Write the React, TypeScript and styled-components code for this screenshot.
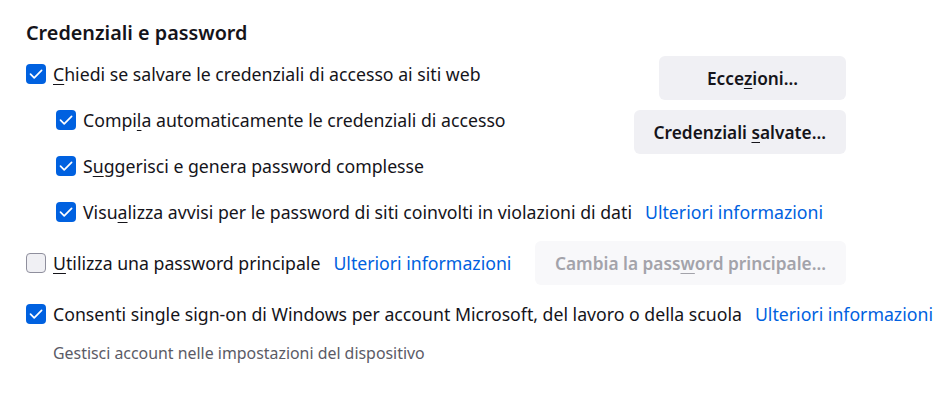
import { FC, ReactNode } from 'react'
import styled, { createGlobalStyle } from 'styled-components'

const COLORS = {
    text: '#15141a',
    muted: '#5b5b66',
    accent: '#0061e0',
    link: '#0061e0',
    buttonBg: '#f0f0f4',
    disabledBg: '#f8f8fa',
    disabledText: '#a3a3aa',
    border: '#8f8f9d',
}

const GlobalStyle = createGlobalStyle`
  body {
    margin: 0;
    background: #ffffff;
    font-family: "Noto Sans", "Open Sans", sans-serif;
    color: ${COLORS.text};
  }
`

const Key: FC<{ children: ReactNode }> = ({ children }) => <U>{children}</U>

const CheckBox: FC<{ checked?: boolean }> = ({ checked }) => (
    <Box $checked={checked}>
        {checked && (
            <svg width="20" height="20" viewBox="0 0 20 20">
                <path d="M4.5 10.2 L8.2 13.8 L15.6 6.4" fill="none" stroke="#fff" strokeWidth="1.7"
                      strokeLinecap="round" strokeLinejoin="round"/>
            </svg>
        )}
    </Box>
)

const App: FC = () => {
    return (
        <>
            <GlobalStyle/>
            <Page>
                <Title>Credenziali e password</Title>
                <TopArea>
                    <Checks>
                        <Row>
                            <CheckBox checked/>
                            <Label><Key>C</Key>hiedi se salvare le credenziali di accesso ai siti web</Label>
                        </Row>
                        <Row $indent>
                            <CheckBox checked/>
                            <Label>Compi<Key>l</Key>a automaticamente le credenziali di accesso</Label>
                        </Row>
                        <Row $indent>
                            <CheckBox checked/>
                            <Label>S<Key>u</Key>ggerisci e genera password complesse</Label>
                        </Row>
                        <Row $indent>
                            <CheckBox checked/>
                            <Label>Visu<Key>a</Key>lizza avvisi per le password di siti coinvolti in violazioni di dati</Label>
                            <Link>Ulteriori informazioni</Link>
                        </Row>
                    </Checks>
                    <Buttons>
                        <Button $minWidth={187}>Ecce<Key>z</Key>ioni...</Button>
                        <Button>Credenziali <Key>s</Key>alvate...</Button>
                    </Buttons>
                </TopArea>
                <PrimaryRow>
                    <CheckBox/>
                    <Label><Key>U</Key>tilizza una password principale</Label>
                    <Link>Ulteriori informazioni</Link>
                    <Button disabled>Cambia la pass<Key>w</Key>ord principale...</Button>
                </PrimaryRow>
                <Row>
                    <CheckBox checked/>
                    <Label>Consenti single sign-on di Windows per account Microsoft, del lavoro o della scuola</Label>
                    <Link>Ulteriori informazioni</Link>
                </Row>
                <Hint>Gestisci account nelle impostazioni del dispositivo</Hint>
            </Page>
        </>
    )
}

const Page = styled.div`
  padding: 19px 0 0 26px;
  width: 820px;
  font-size: 17.7px;
`

const Title = styled.h2`
  margin: 0 0 9px;
  font-size: 19.8px;
  font-weight: 600;
  line-height: 28px;
`

const TopArea = styled.div`
  display: flex;
  align-items: flex-start;
`

const Checks = styled.div`
  flex: 1 1 auto;
  min-width: 0;
  display: flex;
  flex-direction: column;
  gap: 10px;
`

const Row = styled.div<{ $indent?: boolean }>`
  display: flex;
  align-items: center;
  height: 36px;
  padding-left: ${p => (p.$indent ? 30 : 0)}px;
  white-space: nowrap;
`

const PrimaryRow = styled.div`
  display: flex;
  align-items: center;
  height: 44px;
  margin: 11px 0;
  white-space: nowrap;

  & > button {
    margin-left: auto;
  }
`

const Box = styled.span<{ $checked?: boolean }>`
  flex: none;
  box-sizing: border-box;
  width: 20px;
  height: 20px;
  border-radius: 4px;
  background: ${p => (p.$checked ? COLORS.accent : COLORS.buttonBg)};
  border: ${p => (p.$checked ? 'none' : `1px solid ${COLORS.border}`)};
  display: flex;

  svg {
    display: block;
  }
`

const Label = styled.span`
  margin-left: 7px;
`

const Link = styled.a`
  margin-left: 13px;
  color: ${COLORS.link};
  cursor: pointer;
`

const U = styled.span`
  text-decoration: underline;
  text-underline-offset: 3px;
`

const Buttons = styled.div`
  flex: none;
  display: flex;
  flex-direction: column;
  align-items: flex-end;
  gap: 10px;
`

const Button = styled.button<{ $minWidth?: number }>`
  box-sizing: border-box;
  height: 44px;
  min-width: ${p => p.$minWidth ?? 0}px;
  padding: 0 20px;
  border: none;
  border-radius: 6px;
  background: ${COLORS.buttonBg};
  color: ${COLORS.text};
  font-family: inherit;
  font-size: 17.3px;
  font-weight: 600;
  white-space: nowrap;

  &:disabled {
    background: ${COLORS.disabledBg};
    color: ${COLORS.disabledText};
  }
`

const Hint = styled.div`
  margin-top: 10px;
  padding-left: 27px;
  line-height: 22px;
  font-size: 15.9px;
  color: ${COLORS.muted};
`

export default App
